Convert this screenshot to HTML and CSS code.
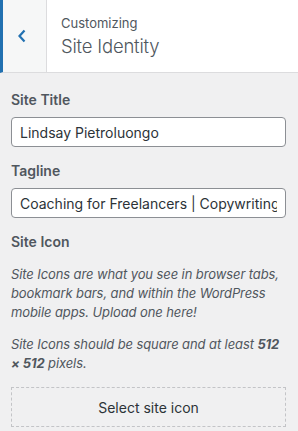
FILE: index.html
```html
<!DOCTYPE html>
<html>
<head>
<meta charset="utf-8">
<link rel="stylesheet" href="styles.css">
</head>
<body>
<div class="header">
  <div class="back">
    <svg width="10" height="14" viewBox="0 0 10 14"><polyline points="7.5,1.5 2.5,7 7.5,12.5" fill="none" stroke="#2271b1" stroke-width="2.2"/></svg>
  </div>
  <div class="titles">
    <div class="sup">Customizing</div>
    <div class="title">Site Identity</div>
  </div>
</div>
<div class="content">
  <div class="control">
    <label class="ctitle">Site Title</label>
    <input class="field" type="text" value="Lindsay Pietroluongo">
  </div>
  <div class="control">
    <label class="ctitle">Tagline</label>
    <input class="field" type="text" value="Coaching for Freelancers | Copywriting Services">
  </div>
  <div class="control">
    <div class="ctitle">Site Icon</div>
    <p class="desc">Site Icons are what you see in browser tabs, bookmark bars, and within the WordPress mobile apps. Upload one here!</p>
    <p class="desc">Site Icons should be square and at least <strong>512</strong> <strong>× 512</strong> pixels.</p>
    <div class="select">Select site icon</div>
  </div>
</div>
</body>
</html>
```
FILE: styles.css
```css
* { box-sizing: border-box; }
html, body { margin: 0; padding: 0; }
body {
  background: #f0f0f1;
  font-family: Inter, "Noto Sans", sans-serif;
  color: #50575e;
  width: 298px;
  height: 431px;
  overflow: hidden;
}
.header {
  display: flex;
  height: 73px;
  background: #fff;
  border-bottom: 1px solid #dcdcde;
  border-left: 3px solid #2271b1;
}
.back {
  width: 44px;
  background: #f6f7f7;
  border-right: 1px solid #dcdcde;
  display: flex;
  align-items: center;
  justify-content: center;
  padding-right: 5px;
}
.back svg { display: block; margin-top: -1px; }
.titles {
  padding: 14px 0 0 14px;
}
.sup {
  font-size: 13px;
  line-height: 18px;
  color: #50575e;
}
.title {
  font-size: 18.5px;
  font-weight: 300;
  line-height: 26px;
  letter-spacing: -0.2px;
  color: #50575e;
  margin-top: 1px;
}
.content {
  padding: 17px 12px 0 11px;
}
.control { margin-bottom: 14px; }
.ctitle {
  display: block;
  font-size: 14px;
  font-weight: 600;
  line-height: 20px;
  color: #50575e;
  margin-bottom: 7px;
}
.field {
  display: block;
  width: 100%;
  height: 30px;
  border: 1px solid #8c8f94;
  border-radius: 4px;
  padding: 0 8px;
  font-family: Inter, "Noto Sans", sans-serif;
  font-size: 14px;
  color: #2c3338;
  background: #fff;
  margin: 0;
}
.desc {
  margin: 13px 0 0;
  font-size: 13px;
  line-height: 19px;
  letter-spacing: -0.1px;
  font-style: italic;
  color: #50575e;
}
.desc + .desc { margin-top: 13px; }
.desc strong { font-weight: 700; }
.select {
  margin-top: 14px;
  height: 40px;
  border: 1px dashed #c3c4c7;
  display: flex;
  align-items: center;
  justify-content: center;
  font-size: 14px;
  color: #2c3338;
}
```
